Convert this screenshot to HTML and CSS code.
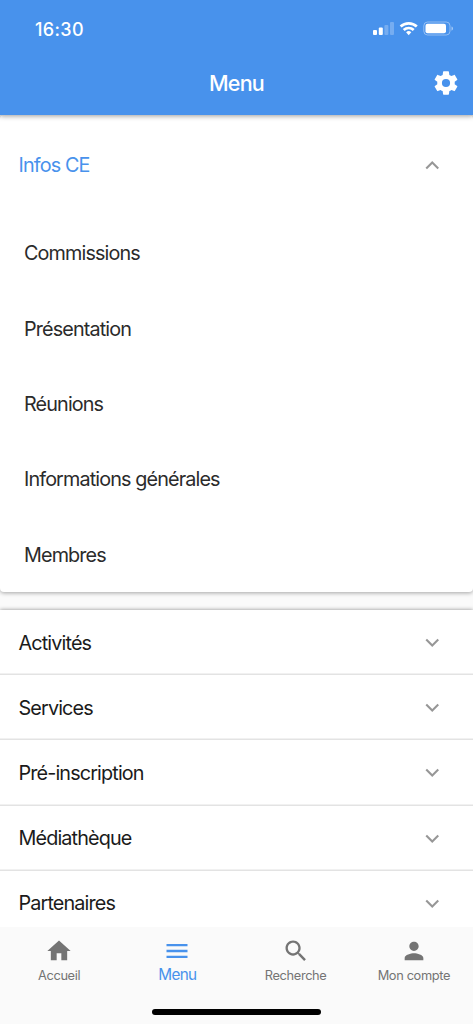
FILE: index.html
```html
<!DOCTYPE html>
<html lang="fr">
<head>
<meta charset="utf-8">
<meta name="viewport" content="width=device-width, initial-scale=1">
<title>Menu</title>
<link rel="stylesheet" href="styles.css">
</head>
<body>
<div class="app">
  <header class="header">
    <div class="status">
      <span class="time">16:30</span>
      <svg class="status-icons" width="82" height="16" viewBox="0 0 82 16" fill="#fff">
        <rect x="0" y="9" width="4" height="5" rx="1"/>
        <rect x="5.8" y="6.5" width="4" height="7.5" rx="1"/>
        <rect x="11.4" y="4" width="4" height="10" rx="1" opacity=".25"/>
        <rect x="17" y="1" width="4" height="13" rx="1" opacity=".25"/>
        <g fill="none" stroke="#fff" stroke-width="2.700">
          <path d="M27.600 5.500a11.800 11.800 0 0 1 16.200 0"/>
          <path d="M30.700 9a7.200 7.200 0 0 1 10 0"/>
        </g>
        <path d="M35.700 14.200l-2.600-2.900a3.800 3.800 0 0 1 5.200 0z"/>
        <rect x="50.800" y="1" width="26.200" height="13" rx="3.800" fill="none" stroke="#fff" opacity=".4"/>
        <rect x="52.500" y="2.700" width="20.500" height="9.600" rx="2"/>
        <path d="M78.500 5.500c2 .6 2 3.600 0 4.200z" opacity=".5"/>
      </svg>
    </div>
    <div class="toolbar">
      <h1 class="title">Menu</h1>
      <svg class="settings" width="28" height="28" viewBox="0 0 24 24" fill="#fff"><path d="M19.430 12.980c.04-.32.07-.64.07-.98s-.03-.66-.07-.98l2.110-1.650c.19-.15.24-.42.12-.64l-2-3.460c-.12-.22-.39-.3-.61-.22l-2.490 1c-.52-.4-1.080-.73-1.690-.98l-.38-2.650C14.460 2.180 14.250 2 14 2h-4c-.25 0-.46.18-.49.42l-.38 2.650c-.61.25-1.170.59-1.690.98l-2.490-1c-.23-.09-.49 0-.61.22l-2 3.460c-.13.22-.07.49.12.64l2.110 1.650c-.04.32-.07.65-.07.98s.03.66.07.98l-2.110 1.650c-.19.15-.24.42-.12.64l2 3.460c.12.22.39.3.61.22l2.490-1c.52.4 1.080.73 1.690.98l.38 2.650c.03.24.24.42.49.42h4c.25 0 .46-.18.49-.42l.38-2.650c.61-.25 1.170-.59 1.690-.98l2.490 1c.23.09.49 0 .61-.22l2-3.460c.12-.22.07-.49-.12-.64l-2.110-1.650zM12 15.500a3.500 3.500 0 1 1 0-7 3.500 3.500 0 0 1 0 7z"/></svg>
    </div>
  </header>
  <main class="content">
    <section class="panel panel-open">
      <div class="row row-active"><span>Infos CE</span><svg class="chevron" viewBox="0 0 14 9"><path d="M1 7.500l6-6 6 6"/></svg></div>
      <ul class="submenu">
        <li>Commissions</li>
        <li>Présentation</li>
        <li>Réunions</li>
        <li>Informations générales</li>
        <li>Membres</li>
      </ul>
    </section>
    <section class="panel panel-list">
      <div class="row"><span>Activités</span><svg class="chevron" viewBox="0 0 14 9"><path d="M1 1.500l6 6 6-6"/></svg></div>
      <div class="row"><span>Services</span><svg class="chevron" viewBox="0 0 14 9"><path d="M1 1.500l6 6 6-6"/></svg></div>
      <div class="row"><span>Pré-inscription</span><svg class="chevron" viewBox="0 0 14 9"><path d="M1 1.500l6 6 6-6"/></svg></div>
      <div class="row"><span>Médiathèque</span><svg class="chevron" viewBox="0 0 14 9"><path d="M1 1.500l6 6 6-6"/></svg></div>
      <div class="row"><span>Partenaires</span><svg class="chevron" viewBox="0 0 14 9"><path d="M1 1.500l6 6 6-6"/></svg></div>
    </section>
  </main>
  <footer class="footer">
    <nav class="tabs">
      <a class="tab"><svg viewBox="0 0 24 24"><path d="M10 20v-6h4v6h5v-8h3L12 3 2 12h3v8z"/></svg><span>Accueil</span></a>
      <a class="tab tab-active"><svg viewBox="0 0 24 24"><path d="M3 18h18v-2H3v2zm0-5h18v-2H3v2zm0-7v2h18V6H3z"/></svg><span>Menu</span></a>
      <a class="tab"><svg viewBox="0 0 24 24"><path d="M15.500 14h-.79l-.28-.27C15.410 12.590 16 11.110 16 9.500 16 5.910 13.090 3 9.500 3S3 5.910 3 9.500 5.910 16 9.500 16c1.610 0 3.090-.59 4.230-1.570l.27.28v.79l5 4.990L20.490 19l-4.990-5zm-6 0C7.010 14 5 11.990 5 9.500S7.010 5 9.500 5 14 7.010 14 9.500 11.990 14 9.500 14z"/></svg><span>Recherche</span></a>
      <a class="tab"><svg viewBox="0 0 24 24"><path d="M12 12c2.210 0 4-1.790 4-4s-1.790-4-4-4-4 1.790-4 4 1.790 4 4 4zm0 2c-2.670 0-8 1.340-8 4v2h16v-2c0-2.660-5.330-4-8-4z"/></svg><span>Mon compte</span></a>
    </nav>
    <div class="home-indicator"></div>
  </footer>
</div>
</body>
</html>
```
FILE: styles.css
```css
* { box-sizing: border-box; }
body { margin: 0; font-family: Inter, "Liberation Sans", sans-serif; background: #fafafa; }
.app { width: 100%; height: 1024px; display: flex; flex-direction: column; overflow: hidden; }
.header { flex: 0 0 114.5px; background: #4892ec; color: #fff; box-shadow: 0 1px 5px rgba(0,0,0,.4); z-index: 1; }
.status { height: 52px; padding: 6px 18px 0 35px; display: flex; align-items: center; justify-content: space-between; }
.time { font-size: 18px; font-weight: 550; letter-spacing: .35px; }
.toolbar { height: 62px; padding: 0 13.5px; display: grid; grid-template-columns: 28px 1fr 28px; align-items: center; }
.title { grid-column: 2; margin: 0; text-align: center; font-size: 21.5px; line-height: 28px; font-weight: 500; letter-spacing: -.8px; }
.content { flex: 1; min-height: 0; overflow: hidden; }
.panel { background: #fff; border-radius: 4px; box-shadow: 0 1px 4px rgba(0,0,0,.35); }
.panel-open { height: 477.5px; margin-bottom: 18px; }
.panel-list { border-radius: 0; box-shadow: 0 0 4px rgba(0,0,0,.45); }
.row { height: 65.2px; padding: 0 34px 0 18.5px; display: flex; align-items: center; justify-content: space-between; font-size: 19.8px; letter-spacing: -.86px; color: #1b1b1b; }
.panel-list .row:not(:last-child) { box-shadow: inset 0 -1.5px #e3e3e3; }
.panel-open .row { height: 101px; }
.panel-open .row-active { color: #4892ec; }
.chevron { width: 14.5px; height: 9px; fill: none; stroke: #979797; stroke-width: 2.1; }
.submenu { list-style: none; margin: 0; padding: 0; }
.submenu li { height: 75.4px; padding-left: 24px; display: flex; align-items: center; font-size: 19.8px; letter-spacing: -.87px; color: #2b2b2b; }
.footer { flex: 0 0 97.5px; background: #fafafa; display: flex; flex-direction: column; align-items: center; z-index: 1; }
.tabs { width: 100%; height: 85px; display: grid; grid-template-columns: repeat(4, 1fr); }
.tab { padding-top: 10.5px; display: flex; flex-direction: column; align-items: center; color: #747474; font-size: 12.8px; line-height: 21px; letter-spacing: -.35px; }
.tab svg { width: 28px; height: 28px; fill: currentColor; }
.tab-active { color: #4892ec; font-size: 15.3px; line-height: 19px; letter-spacing: -.7px; }
.home-indicator { width: 169px; height: 6px; margin-top: -3px; border-radius: 3px; background: #000; }
```
